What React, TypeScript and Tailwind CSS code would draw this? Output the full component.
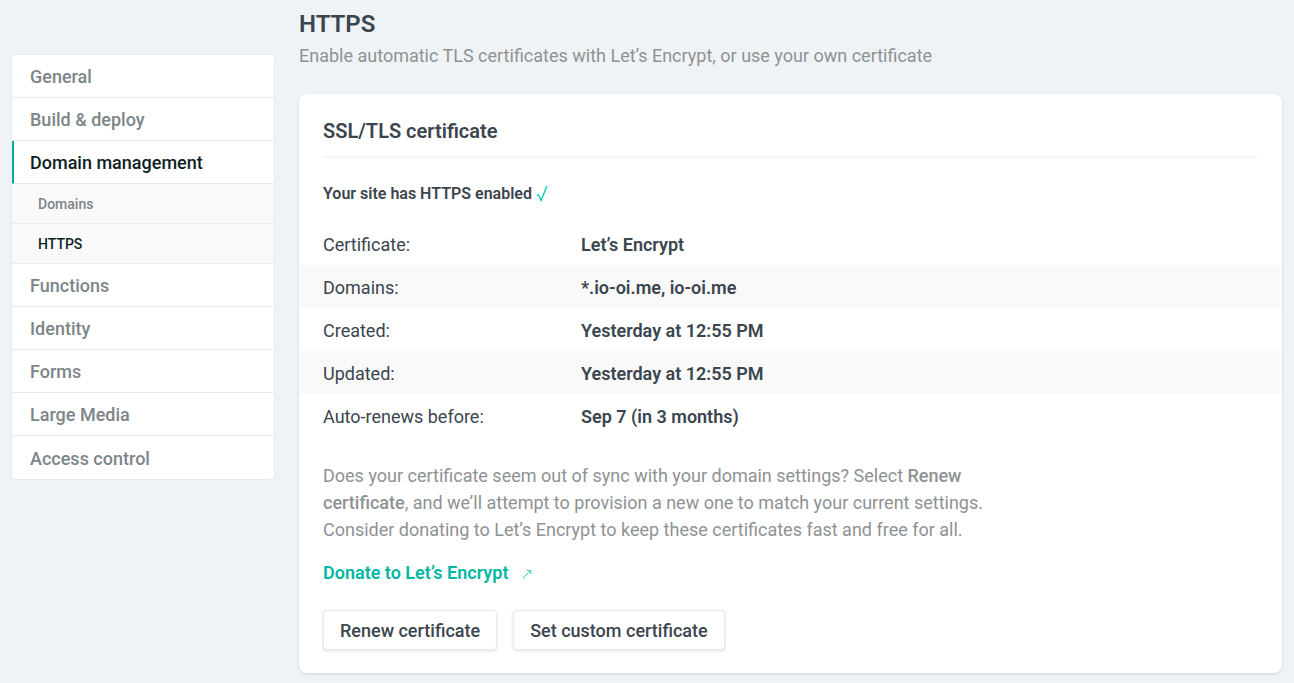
import React from "react";

const nav1 = ["General", "Build & deploy"];
const nav2 = ["Functions", "Identity", "Forms", "Large Media", "Access control"];
const rows = [
  ["Certificate:", "Let’s Encrypt", false],
  ["Domains:", "*.io-oi.me, io-oi.me", true],
  ["Created:", "Yesterday at 12:55 PM", false],
  ["Updated:", "Yesterday at 12:55 PM", true],
  ["Auto-renews before:", "Sep 7 (in 3 months)", false],
] as const;

function NavItem({ label }: { label: string }) {
  return (
    <div className="h-[43px] border-b border-[#e9ebeb] pl-[18px] pt-[1px] flex items-center text-[18px] font-medium text-[#7d8589] last:border-b-0">
      {label}
    </div>
  );
}

export default function App() {
  return (
    <div className="h-[683px] overflow-hidden bg-[#f0f3f6] flex items-start pl-[11px] pr-[12px] font-['Roboto',sans-serif]">
      <div className="w-[264px] mt-[54px] mr-[24px] shrink-0 bg-white border border-[#e9ebeb] rounded-[4px] overflow-hidden">
        {nav1.map((l) => (
          <NavItem key={l} label={l} />
        ))}
        <div className="h-[43px] border-b border-[#e9ebeb] border-l-2 border-l-[#00ad9f] pl-[16px] pt-[1px] flex items-center text-[18px] font-medium text-[#0e1e25]">
          Domain management
        </div>
        <div className="h-[40px] border-b border-[#e9ebeb] bg-[#f9f9f9] pl-[26px] pt-[1px] flex items-center text-[14px] font-medium text-[#7d8589]">
          Domains
        </div>
        <div className="h-[40px] border-b border-[#e9ebeb] bg-[#f9f9f9] pl-[26px] pt-[1px] flex items-center text-[14px] font-medium text-[#0e1e25]">
          HTTPS
        </div>
        {nav2.map((l) => (
          <NavItem key={l} label={l} />
        ))}
      </div>
      <div className="flex-1 min-w-0">
        <h1 className="mt-[9px] h-[30px] leading-[30px] text-[24px] font-semibold text-[#3a454e]">HTTPS</h1>
        <p className="mt-[3px] h-[28px] leading-[28px] text-[18px] text-[#8e9294]">
          Enable automatic TLS certificates with Let’s Encrypt, or use your own certificate
        </p>
        <div className="mt-[24px] h-[579px] bg-white rounded-[8px] shadow-[0_1px_3px_rgba(14,30,37,0.14)] pt-[24px]">
          <div className="mx-[24px] h-[40px] border-b-2 border-[#f5f5fa]">
            <h2 className="text-[20px] leading-[26px] font-semibold text-[#3a454e]">SSL/TLS certificate</h2>
          </div>
          <p className="mx-[24px] mt-[23px] h-[26px] leading-[26px] flex items-center text-[16px] font-semibold text-[#3a454e]">
            Your site has HTTPS enabled
            <svg className="ml-[4px] -mt-[1px]" width="12" height="17" viewBox="0 0 12 17" fill="none" stroke="#00c7b7" strokeWidth="1.3">
              <path d="M1 10.5 L2.5 9.6 L5 15.5 L11 1" />
            </svg>
          </p>
          <div className="mt-[15px]">
            {rows.map(([k, v, alt]) => (
              <div key={k} className={`h-[43px] px-[24px] pt-[1px] flex items-center text-[18px] text-[#3a454e] ${alt ? "bg-[#f9f9f9]" : ""}`}>
                <span className="w-[258px] shrink-0">{k}</span>
                <span className="font-semibold">{v}</span>
              </div>
            ))}
          </div>
          <p className="mx-[24px] mt-[25px] w-[680px] text-[18px] leading-[27px] text-[#8e9294]">
            Does your certificate seem out of sync with your domain settings? Select <b className="font-medium">Renew certificate</b>, and we’ll attempt to provision a new one to match your current settings. Consider donating to Let’s Encrypt to keep these certificates fast and free for all.
          </p>
          <a className="mx-[24px] mt-[16px] flex items-center h-[27px] text-[18px] font-semibold text-[#00b8a3]">
            Donate to Let’s Encrypt
            <svg className="ml-[14px] mt-[3px]" width="10" height="10" viewBox="0 0 10 10" fill="none" stroke="#00b8a3" strokeWidth="0.8">
              <path d="M0.5 9.2 L8.8 1.6 M5 1.6 H8.8 V5" />
            </svg>
          </a>
          <div className="mx-[24px] mt-[24px] flex gap-[16px]">
            <button className="h-[40px] px-[16px] bg-white border border-[#e9ebeb] rounded-[4px] shadow-[0_1px_3px_rgba(14,30,37,0.14)] text-[18px] font-medium text-[#3a454e]">
              Renew certificate
            </button>
            <button className="h-[40px] px-[16px] bg-white border border-[#e9ebeb] rounded-[4px] shadow-[0_1px_3px_rgba(14,30,37,0.14)] text-[18px] font-medium text-[#3a454e]">
              Set custom certificate
            </button>
          </div>
        </div>
      </div>
    </div>
  );
}
